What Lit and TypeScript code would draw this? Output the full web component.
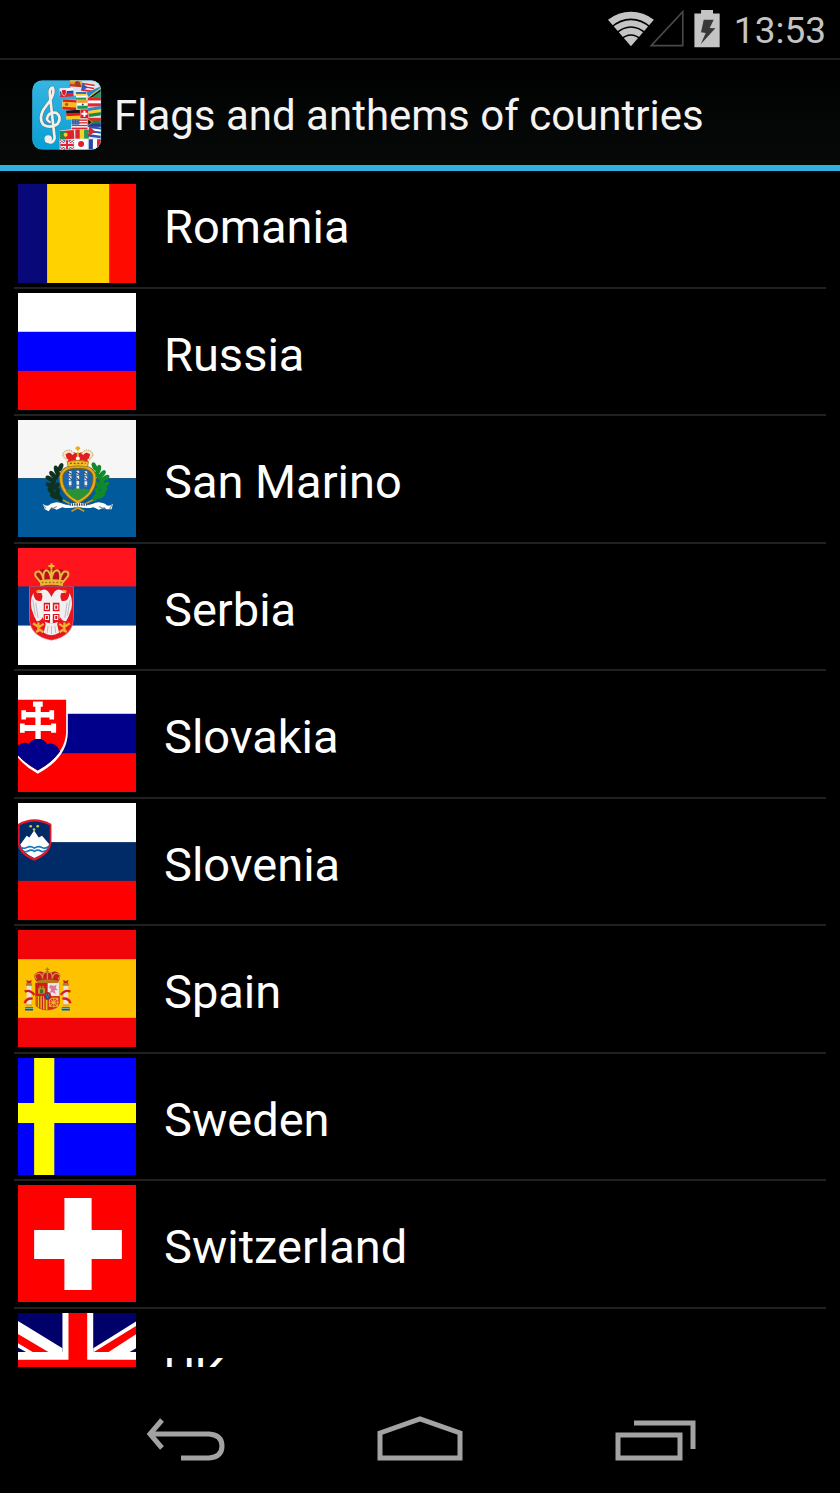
import { LitElement, html, css, svg, SVGTemplateResult } from "lit";
import { customElement, property } from "lit/decorators.js";

const bands = (a: string, b: string, c: string, y1 = 132, y2 = 250) => svg`
  <rect x="24" y="15" width="353" height="353" fill=${a} />
  <rect x="24" y=${y1} width="353" height=${368 - y1} fill=${b} />
  <rect x="24" y=${y2} width="353" height=${368 - y2} fill=${c} />`;

const unionArms = svg`
  <path d="M54 78L187 160V172H54Z" fill="#fff" />
  <path d="M54 117L145 172H98L54 145Z" fill="#f00" />
  <path d="M54 158L78 172H54Z" fill="#00006b" />
  <path d="M407 80L279 160V172H407Z" fill="#fff" />
  <path d="M407 93V118L325 172H281Z" fill="#f00" />
  <path d="M407 160L388 172H407Z" fill="#00006b" />`;

const leaf = (x: number, y: number, r: number, fill: string) => svg`
  <ellipse cx=${x} cy=${y} rx="7" ry="14" fill=${fill} transform="rotate(${r} ${x} ${y})" />`;

const laurel: Array<[number, number, number]> = [
  [151, 158, 25], [139, 166, -15], [128, 180, -40], [141, 184, 35], [119, 192, -60],
  [130, 202, 20], [119, 213, -55], [138, 215, 40], [124, 230, -50], [142, 234, 15],
  [132, 245, -60], [148, 250, -30],
];

const FLAGS: Record<string, { box: string; art: SVGTemplateResult }> = {
  romania: {
    box: "54 42 353 296",
    art: svg`
      <rect x="54" y="42" width="87" height="296" fill="#080878" />
      <rect x="141" y="42" width="187" height="296" fill="#ffd200" />
      <rect x="328" y="42" width="79" height="296" fill="#ff0a00" />`,
  },
  russia: { box: "24 15 353 353", art: bands("#fff", "#00f", "#f00") },
  sanmarino: {
    box: "24 15 353 353",
    art: svg`
      <rect x="24" y="15" width="353" height="176" fill="#f6f6f6" />
      <rect x="24" y="191" width="353" height="177" fill="#005a9c" />
      ${laurel.map(([x, y, r]) => leaf(x, y, r, "#0d3320"))}
      ${laurel.map(([x, y, r]) => leaf(404 - x, y - 2, -r, "#118a2a"))}
      <path d="M158 256L222 290M248 256L184 290" stroke="#c99b1c" stroke-width="5" />
      <path d="M203 156C170 154 152 170 153 190C153 222 172 246 203 262C234 246 253 222 253 190C254 170 236 154 203 156Z" fill="#1d64a8" stroke="#8a6510" stroke-width="12" />
      <path d="M203 156C170 154 152 170 153 190C153 222 172 246 203 262C234 246 253 222 253 190C254 170 236 154 203 156Z" fill="none" stroke="#e2ac1c" stroke-width="7" />
      <path d="M167 230Q180 218 188 226Q202 212 214 225Q226 216 239 230Q222 250 203 257Q182 250 167 230Z" fill="#2a9136" />
      <path d="M180 170V216M203 168V222M227 170V216" stroke="#e9eef2" stroke-width="8" stroke-dasharray="12 3" />
      <path d="M174 172L184 179M176 187L185 196M198 172L208 179M199 189L208 199M221 172L231 179M223 187L232 196" fill="none" stroke="#26364a" stroke-width="3" />
      <path d="M173 143L166 118Q184 106 203 116Q222 106 240 118L233 143Q203 150 173 143Z" fill="#e31b23" />
      <path d="M173 138Q154 126 163 114Q178 102 190 118M233 138Q252 126 243 114Q228 102 216 118" fill="none" stroke="#f3e6c4" stroke-width="8" />
      <path d="M169 133Q152 122 162 111Q178 99 190 114M237 133Q254 122 244 111Q228 99 216 114" fill="none" stroke="#a27a22" stroke-width="2" stroke-dasharray="4 3" />
      <path d="M203 94V108M196 100H210M203 112V137" stroke="#e4ad12" stroke-width="6" />
      <circle cx="203" cy="131" r="6" fill="#fff" />
      <path d="M171 141Q203 132 235 141L232 157Q203 149 174 157Z" fill="#f0bd25" stroke="#8f6a14" stroke-width="2" />
      <path d="M180 146H226" stroke="#b7321c" stroke-width="4" stroke-dasharray="5 6" />
      <path d="M98 268Q112 280 122 268Q142 258 158 268Q180 276 203 266Q226 276 248 268Q264 258 284 268Q294 280 308 268L304 284L288 284L282 278L266 286L250 278Q228 284 203 276Q178 284 156 278L140 286L124 278L116 290L104 284Z" fill="#fff" />
      <path d="M178 268Q203 261 228 268V276Q203 270 178 276Z" fill="#fff" />
      <path d="M178 270H230" stroke="#33404a" stroke-width="8" stroke-dasharray="4 3" />
      <path d="M98 270L108 282M306 270L298 284M124 284L140 276M266 276L284 284" stroke="#7d8791" stroke-width="3" />`,
  },
  serbia: {
    box: "24 15 353 353",
    art: svg`
      ${bands("#ff131d", "#00388a", "#fff", 131, 249)}
      <path d="M91 126L74 96Q72 82 88 84Q96 74 110 82Q124 66 138 82Q152 74 162 84Q178 82 175 96L159 126Q124 118 91 126Z" fill="#b5121b" />
      <path d="M93 120L76 99Q73 84 88 86Q98 92 101 116M101 116Q96 88 108 82Q120 82 124 114M124 114Q126 82 142 82Q154 88 149 116M149 116Q152 92 162 86Q178 84 174 99L157 120M124 80V118" fill="none" stroke="#e8b83c" stroke-width="6" />
      <path d="M124 61V79M115 69H133" stroke="#f2bf29" stroke-width="6" />
      <path d="M89 112Q124 106 160 112L158 130Q124 122 91 130Z" fill="#efb935" />
      <path d="M95 119H156" stroke="#a76814" stroke-width="4" stroke-dasharray="5 6" />
      <path d="M57 131H191V225Q190 283 124 294Q58 283 57 225Z" fill="#f0606a" />
      <path d="M59 133H189V225Q187 281 124 292Q61 281 59 225Z" fill="#e8141e" />
      <path d="M124 163Q112 137 99 141Q89 142 82 150L94 151Q100 160 94 174Q72 180 70 151Q59 172 64 197L72 220L80 236Q91 237 98 224L107 244L101 271Q124 285 147 271L141 244L150 224Q157 237 168 236L176 220L184 197Q189 172 178 151Q176 180 154 174Q148 160 154 151L166 150Q159 142 149 141Q136 137 124 163Z" fill="#f2eff1" />
      <path d="M68 170L76 219M77 180L84 226M180 170L172 219M171 180L164 226M114 250L111 271M124 250V275M134 250L137 271" stroke="#c1bac2" stroke-width="3" />
      <path d="M101 180H148V237Q124 248 101 237Z" fill="#df1420" />
      <path d="M124 179V243M100 210H149" stroke="#fff" stroke-width="8" />
      <path d="M106 187H115V200H106ZM134 187H143V200H134ZM106 219H115V231H106ZM134 219H143V231H134Z" fill="none" stroke="#fff" stroke-width="3" />
      <path d="M84 150Q77 144 90 144M164 150Q171 144 158 144" fill="none" stroke="#f0b429" stroke-width="6" />
      <path d="M69 242L86 254L101 244M85 240V265M78 268L90 262L100 269M179 242L162 254L147 244M163 240V265M170 268L158 262L148 269" fill="none" stroke="#eeb22c" stroke-width="7" />`,
  },
  slovakia: {
    box: "24 15 353 353",
    art: svg`
      ${bands("#fff", "#00008b", "#f00", 132, 251)}
      <path d="M24 90H173V190Q171 265 83 313Q49 295 24 265Z" fill="#fff" />
      <path d="M24 90H168V190Q163 258 83 303Q48 284 24 257Z" fill="#f00" />
      <path d="M24 228Q42 214 56 223Q68 207 84 207Q100 207 112 223Q137 216 150 246Q126 280 83 303Q48 284 24 257Z" fill="#00008b" />
      <path d="M76 208V184H44V189H30V161H44V166H76V143H48V149H34V121H48V127H76V111H69V95H98V111H92V127H118V121H132V149H118V143H92V166H123V161H138V189H123V184H92V208Z" fill="#fff" />`,
  },
  slovenia: {
    box: "24 15 353 353",
    art: svg`
      ${bands("#fff", "#002b66", "#f00", 133, 250)}
      <path d="M24 78Q72 50 124 78V132Q122 170 73 189Q28 172 24 140Z" fill="#e5152b" />
      <path d="M29 82Q73 59 119 82V132Q116 164 73 182Q34 166 29 137Z" fill="#002b66" />
      <path d="M31 140L50 114L58 119L72 98L86 119L96 114L117 139Q112 166 73 181Q38 166 31 140Z" fill="#fff" />
      <path d="M33 149Q43 154 51 149Q61 143 73 151Q85 143 95 149Q105 154 114 147M39 160Q47 164 54 160Q64 154 73 161Q83 154 92 160Q100 164 108 158" fill="none" stroke="#1679bd" stroke-width="5" />
      <g fill="#d6cb48"><circle cx="62" cy="85" r="4" /><circle cx="83" cy="85" r="4" /><circle cx="72" cy="95" r="4" /></g>`,
  },
  spain: {
    box: "24 15 353 353",
    art: svg`
      ${bands("#f10509", "#ffc200", "#f10509", 103, 280)}
      <path d="M80 171Q65 150 80 144Q94 136 104 146Q112 132 120 146Q132 136 144 144Q157 152 144 171Q112 164 80 171Z" fill="#c51c20" />
      <path d="M80 164Q68 150 82 147Q95 142 98 162M98 162Q95 140 112 143V164M112 143Q129 140 126 162M126 162Q131 142 142 147Q156 150 144 164" fill="none" stroke="#c8922c" stroke-width="4" />
      <path d="M112 128V144M106 134H118" stroke="#a4782a" stroke-width="4" />
      <path d="M82 168Q112 160 143 168V175H82Z" fill="#b77a1b" />
      <path d="M50 182H64V244H50ZM160 182H174V244H160Z" fill="#e5e3db" />
      <path d="M48 176H66V183H48ZM158 176H176V183H158Z" fill="#b77a1b" />
      <path d="M51 176L49 166L57 169L65 166L63 176ZM161 176L159 166L167 169L175 166L173 176Z" fill="#c0281d" />
      <path d="M44 201Q60 193 73 211M68 222Q48 220 44 236M181 201Q164 193 152 211M157 222Q177 220 181 236" fill="none" stroke="#d31e1e" stroke-width="7" />
      <path d="M48 239H66V246H48ZM158 239H176V246H158Z" fill="#d9a631" />
      <path d="M45 248H69V258H45ZM155 248H179V258H155Z" fill="#10568d" />
      <path d="M45 252H69M155 252H179" stroke="#73b0a9" stroke-width="3" />
      <path d="M75 174H149V235Q147 255 112 258Q77 255 75 235Z" fill="#b66a18" />
      <path d="M77 175H112V214H77Z" fill="#ce1d1d" /><path d="M113 175H148V214H113Z" fill="#eae5e6" />
      <path d="M77 215H112V256Q79 252 77 235Z" fill="#f0b91a" /><path d="M113 215H148V235Q146 252 113 256Z" fill="#d22c1b" />
      <path d="M81 215V246M89 215V252M97 215V255M105 215V256" stroke="#c32919" stroke-width="4" />
      <path d="M84 207V191H88V184H92V191H97V184H101V191H105V207Z" fill="#bd9a24" /><path d="M90 194H99V206H90Z" fill="#46652d" />
      <path d="M121 181L132 184L139 180L137 191L143 196L133 197L137 208L126 202L119 206L123 194L117 188Z" fill="#df7795" />
      <path d="M118 221L143 245M143 221L118 245M131 219V249M116 233H146M118 221H143V245H118Z" fill="none" stroke="#eeb02a" stroke-width="3" />
      <ellipse cx="112" cy="214" rx="11" ry="12" fill="#c81e28" /><ellipse cx="112" cy="214" rx="8" ry="9" fill="#17569b" />
      <path d="M108 211H110M115 211H117M112 217H114" stroke="#e9b82b" stroke-width="3" />`,
  },
  sweden: {
    box: "0 0 117 117",
    art: svg`
      <rect width="117" height="117" fill="#00f" />
      <path d="M16 0H36V45H117V65H36V117H16V65H0V45H16Z" fill="#ff0" />`,
  },
  switzerland: {
    box: "0 0 117 117",
    art: svg`
      <rect width="117" height="117" fill="#f00" />
      <path d="M46 13H73V45H103V74H73V105H46V74H16V45H46Z" fill="#fff" />`,
  },
  uk: {
    box: "54 54 353 353",
    art: svg`
      <rect x="54" y="54" width="353" height="353" fill="#00006b" />
      ${unionArms}
      <g transform="rotate(180 231 231)">${unionArms}</g>
      <path d="M187 54H279V172H407V289H279V407H187V289H54V172H187Z" fill="#fff" />
      <path d="M205 54H261V195H407V266H261V407H205V266H54V195H205Z" fill="#f00" />`,
  },
};

@customElement("country-flag")
class CountryFlag extends LitElement {
  @property() code = "";

  static styles = css`
    :host { display: flex; }
    .art { display: block; width: 100%; height: 100%; }
  `;

  render() {
    const flag = FLAGS[this.code];
    return html`<svg class="art" viewBox=${flag.box} preserveAspectRatio="none" aria-hidden="true">${flag.art}</svg>`;
  }
}

const tricolour = (x: number, y: number, w: number, h: number, colours: string[], vertical = false) =>
  colours.map((c, i) => {
    const n = colours.length;
    return vertical
      ? svg`<rect x=${x + (w * i) / n} y=${y} width=${w / n + 1} height=${h} fill=${c} />`
      : svg`<rect x=${x} y=${y + (h * i) / n} width=${w} height=${h / n + 1} fill=${c} />`;
  });

@customElement("app-logo")
class AppLogo extends LitElement {
  static styles = css`
    :host { display: block; }
    .logo { display: block; width: 70px; height: 70px; }
  `;

  render() {
    return html`<svg class="logo" viewBox="36 29 208 209" aria-hidden="true">
      <defs>
        <clipPath id="tile"><rect x="36" y="30" width="206" height="207" rx="30" /></clipPath>
        <linearGradient id="sky" x1="0" y1="0" x2="0" y2="1">
          <stop offset="0" stop-color="#35b5e2" /><stop offset="1" stop-color="#079fd4" />
        </linearGradient>
      </defs>
      <g clip-path="url(#tile)">
        <rect x="36" y="30" width="206" height="207" fill="url(#sky)" />
        <path d="M150 30H242V237H118V180L152 176V146H138V118H126V88H168V76H118V54H150Z" fill="#dfe3e6" />
        <g transform="rotate(4 165 40)">${tricolour(148, 30, 36, 18, ["#f2b01e", "#e58a16", "#c73521"])}</g>
        <circle cx="171" cy="40" r="8" fill="#a33b25" />
        <g transform="rotate(9 203 52)">
          ${tricolour(184, 40, 37, 23, ["#e2232c", "#fff", "#e2232c", "#fff", "#e2232c"])}
          <path d="M184 40L202 52L184 64Z" fill="#255fba" />
        </g>
        <g transform="rotate(-4 138 65)">
          ${tricolour(119, 54, 40, 24, ["#fff", "#194aa8", "#e31d2a"])}
          <path d="M124 57H138V67Q136 74 131 76Q125 73 124 67Z" fill="#d71929" stroke="#fff" stroke-width="2" />
        </g>
        ${tricolour(167, 65, 30, 22, ["#2a64ba", "#f5d52e", "#fff", "#2a9951"])}
        <path d="M198 66L242 48V80H204Z" fill="#2389ce" />
        <path d="M200 82L242 51V62L211 82Z" fill="#f3d02c" /><path d="M205 82L242 55V62L214 82Z" fill="#222" />
        <path d="M214 83L242 62V83Z" fill="#269a54" />
        <g transform="rotate(3 147 101)">${tricolour(127, 88, 41, 29, ["#e01a1e", "#f9bd16", "#f9bd16", "#e01a1e"])}<circle cx="139" cy="102" r="5" fill="#bd531e" /></g>
        ${tricolour(171, 89, 31, 25, ["#f29a29", "#fff", "#249647"])}<circle cx="187" cy="102" r="3" fill="#243b9d" />
        ${tricolour(202, 82, 40, 25, ["#e32330", "#fff", "#e32330"])}
        <g transform="rotate(-3 156 131)">${tricolour(138, 119, 41, 26, ["#161616", "#df1820", "#f6c81c"])}</g>
        <rect x="180" y="117" width="24" height="26" fill="#df1a23" /><path d="M192 121V139M183 130H201" stroke="#fff" stroke-width="6" />
        <g transform="rotate(-8 222 122)">${tricolour(204, 110, 42, 26, ["#3184ca", "#f5d12b", "#218442"])}</g>
        ${tricolour(154, 147, 47, 28, ["#d92534", "#fff", "#d92534", "#fff", "#d92534", "#fff", "#d92534"])}
        <rect x="154" y="147" width="23" height="15" fill="#31569f" />
        <path d="M157 151H176M157 157H176" stroke="#dce6f3" stroke-width="2" stroke-dasharray="2 3" />
        ${tricolour(202, 142, 40, 26, ["#d92d29", "#22824a", "#293c95"])}
        <path d="M202 145L216 155L202 165Z" fill="#161616" stroke="#f4c929" stroke-width="2" />
        <g transform="rotate(-4 139 192)">
          <rect x="118" y="180" width="18" height="26" fill="#238848" /><rect x="135" y="180" width="26" height="26" fill="#dd2424" />
          <circle cx="136" cy="192" r="6" fill="#f3d12c" />
        </g>
        ${tricolour(165, 177, 39, 27, ["#db252c", "#f6d22b", "#289a4f"], true)}
        <g transform="rotate(8 223 182)">${tricolour(205, 169, 38, 30, ["#2754ad", "#fff", "#2754ad", "#fff", "#2754ad"])}<path d="M205 169L225 184L205 199Z" fill="#d9242e" /></g>
        <rect x="120" y="209" width="40" height="28" fill="#243b91" />
        <path d="M120 209L160 237M160 209L120 237" stroke="#fff" stroke-width="8" /><path d="M120 209L160 237M160 209L120 237" stroke="#dc2633" stroke-width="3" />
        <path d="M140 209V237M120 223H160" stroke="#fff" stroke-width="10" /><path d="M140 209V237M120 223H160" stroke="#dc2633" stroke-width="6" />
        <rect x="163" y="206" width="38" height="30" fill="#fff" /><circle cx="182" cy="220" r="9" fill="#e11e2c" />
        ${tricolour(205, 206, 37, 31, ["#2545aa", "#fff", "#e3202c"], true)}
        <g fill="none" stroke-linecap="round">
          <path d="M78 211Q98 223 103 202L89 75Q86 52 97 52Q104 65 91 88L70 117Q55 145 69 162Q91 176 112 160Q126 139 108 127Q84 124 80 145Q81 151 88 154" stroke="#4b7d92" stroke-width="11" />
          <path d="M78 211Q98 223 103 202L89 75Q86 52 97 52Q104 65 91 88L70 117Q55 145 69 162Q91 176 112 160Q126 139 108 127Q84 124 80 145Q81 151 88 154" stroke="#f2f0ea" stroke-width="8" />
        </g>
        <circle cx="84" cy="205" r="11" fill="#f2f0ea" />
        <rect x="37" y="31" width="204" height="205" rx="29" fill="none" stroke="#49bee5" stroke-width="2" opacity=".6" />
      </g>
    </svg>`;
  }
}

@customElement("status-bar")
class StatusBar extends LitElement {
  static styles = css`
    :host { display: flex; align-items: center; justify-content: flex-end; gap: 14px; height: 58px; padding: 0 14px; border-bottom: 2px solid #1e1e1e; color: #c4c4c4; background: #000; }
    .icons { display: block; width: 112px; height: 38px; }
    .clock { font-size: 37px; line-height: 44px; padding-top: 4px; }
  `;

  render() {
    return html`
      <svg class="icons" viewBox="50 28 337 114" role="img" aria-label="Wi-Fi, no signal, charging">
        <path d="M119 137L50 57Q81 33 119 33Q157 33 188 57Z" fill="#c4c4c4" />
        <g fill="none" stroke="#000" stroke-width="5">
          <path d="M60 80Q87 56 119 56Q151 56 178 80" />
          <path d="M75 98Q95 79 119 79Q143 79 163 98" />
          <path d="M90 116Q103 103 119 103Q135 103 148 116" />
        </g>
        <path d="M180 135L275 33V135Z" fill="none" stroke="#484848" stroke-width="5" />
        <path d="M330 28H366V38H386V140H310V38H330Z" fill="#c4c4c4" />
        <path d="M338 57H368L356 82L373 83L329 131L344 97L330 95Z" fill="#383838" />
      </svg>
      <time class="clock">13:53</time>
    `;
  }
}

@customElement("nav-bar")
class NavBar extends LitElement {
  static styles = css`
    :host { display: flex; justify-content: center; height: 126px; background: #000; }
    .key { flex: 1; max-width: 236px; display: flex; align-items: center; justify-content: center; padding: 16px 0 0; border: 0; background: none; color: #a3a3a3; }
    .glyph { display: block; width: 88px; height: 48px; }
  `;

  render() {
    return html`
      <button class="key" aria-label="Back">
        <svg class="glyph" viewBox="0 0 88 48" fill="none" stroke="currentColor" stroke-width="5">
          <path d="M12 20H69Q82 21 82 32T69 44H41" />
          <path d="M22 6L10 20L22 34" />
        </svg>
      </button>
      <button class="key" aria-label="Home">
        <svg class="glyph" viewBox="0 0 88 48" fill="none" stroke="currentColor" stroke-width="5">
          <path d="M4 19L44 5L84 19V44H4Z" />
        </svg>
      </button>
      <button class="key" aria-label="Recent apps">
        <svg class="glyph" viewBox="0 0 88 48" fill="none" stroke="currentColor" stroke-width="5">
          <path d="M6 21H68V44H6Z" />
          <path d="M22 9H81V35" />
        </svg>
      </button>
    `;
  }
}

@customElement("app-root")
class AppRoot extends LitElement {
  private countries = [
    { code: "romania", name: "Romania" },
    { code: "russia", name: "Russia" },
    { code: "sanmarino", name: "San Marino" },
    { code: "serbia", name: "Serbia" },
    { code: "slovakia", name: "Slovakia" },
    { code: "slovenia", name: "Slovenia" },
    { code: "spain", name: "Spain" },
    { code: "sweden", name: "Sweden" },
    { code: "switzerland", name: "Switzerland" },
    { code: "uk", name: "UK" },
  ];

  static styles = css`
    :host { display: flex; flex-direction: column; height: 100vh; background: #000; color: #fff; font-family: Roboto, "Noto Sans", sans-serif; }
    .header { display: flex; align-items: center; gap: 12px; height: 101px; padding: 4px 32px 0; border-bottom: 6px solid #31b1e2; background: linear-gradient(#000, #070909); }
    .title { margin: 0; padding-top: 2px; font-size: 42px; font-weight: 400; line-height: 50px; color: #f3f3f3; white-space: nowrap; }
    .scroller { flex: 1; min-height: 0; overflow-y: auto; scrollbar-width: none; }
    .list { list-style: none; margin: -10px 14px 0; padding: 0; }
    .item { border-bottom: 2px solid #212121; }
    .row { display: flex; align-items: flex-start; gap: 28px; width: 100%; height: 126px; padding: 4px; border: 0; background: none; color: inherit; font: inherit; text-align: left; }
    .item:nth-child(even) .row { height: 125px; }
    .flag { width: 118px; height: 117px; }
    .flag.short { height: 99px; align-self: flex-end; }
    .name { font-size: 47px; line-height: 56px; padding-top: 34px; }
  `;

  render() {
    return html`
      <status-bar></status-bar>
      <header class="header">
        <app-logo></app-logo>
        <h1 class="title">Flags and anthems of countries</h1>
      </header>
      <main class="scroller">
        <ul class="list">
          ${this.countries.map(
            (c) => html`<li class="item">
              <button class="row">
                <country-flag class="flag ${c.code === "romania" ? "short" : ""}" code=${c.code}></country-flag>
                <span class="name">${c.name}</span>
              </button>
            </li>`
          )}
        </ul>
      </main>
      <nav-bar></nav-bar>
    `;
  }
}
